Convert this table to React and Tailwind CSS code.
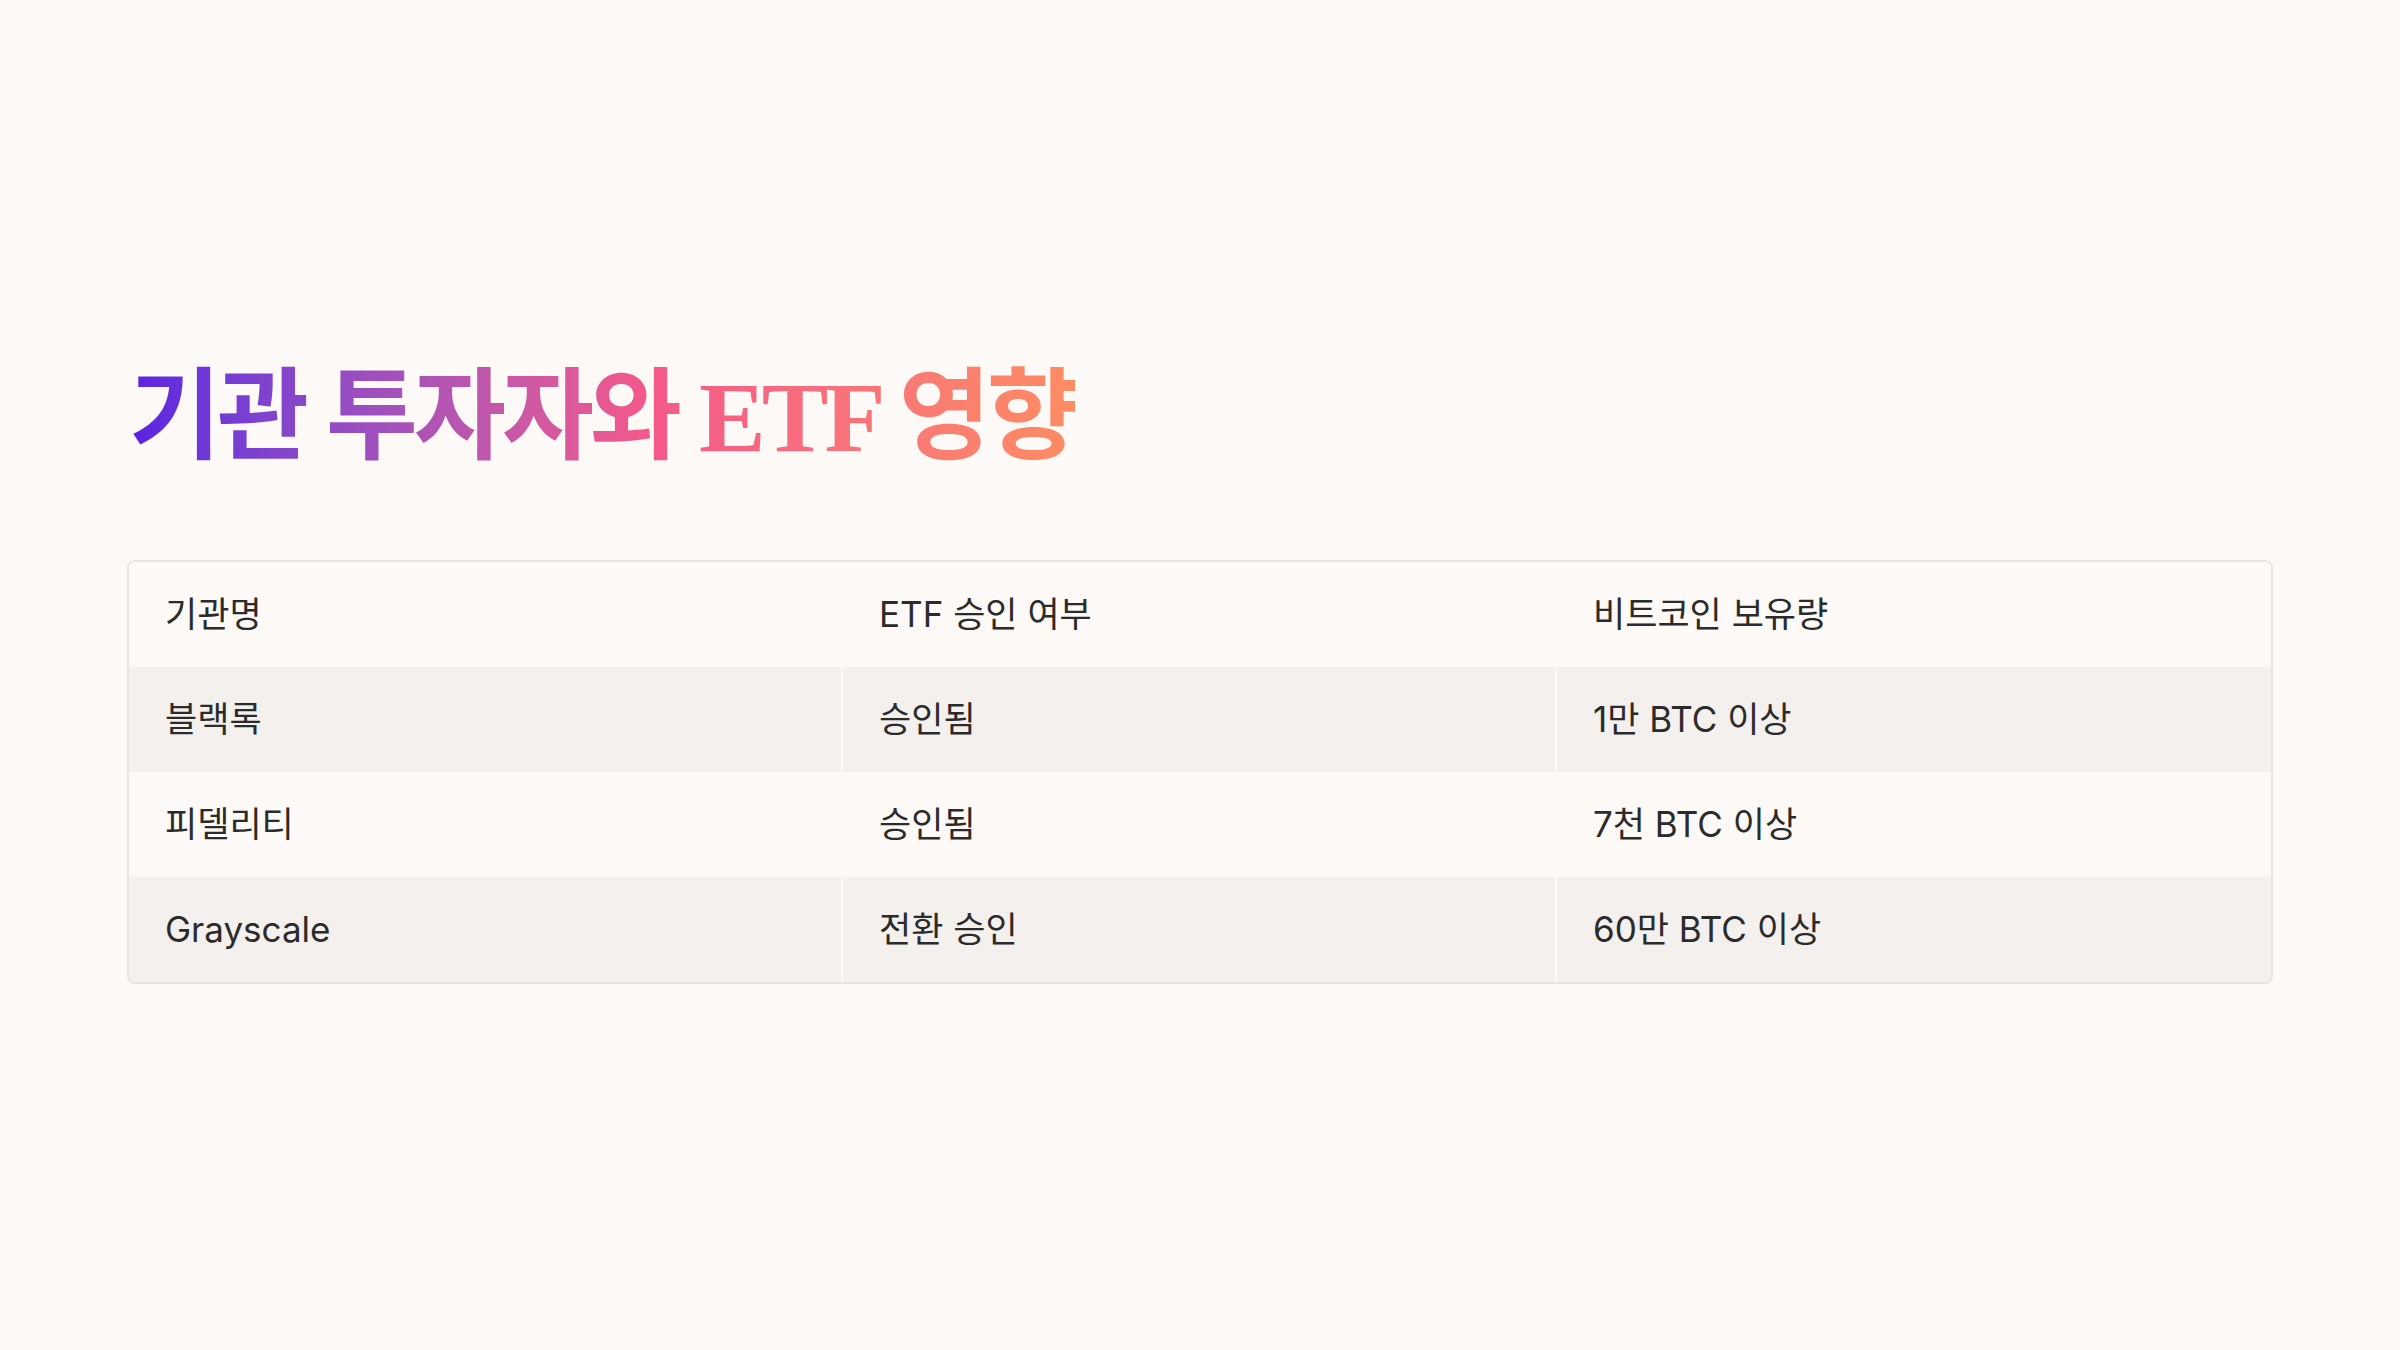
import React from 'react';

const rows = [
  { name: '블랙록', etf: '승인됨', btc: '1만 BTC 이상' },
  { name: '피델리티', etf: '승인됨', btc: '7천 BTC 이상' },
  { name: 'Grayscale', etf: '전환 승인', btc: '60만 BTC 이상' },
];

const Cell = ({ children, last }) => (
  <div
    className={
      'flex items-center h-[105px] pl-[36px] ' +
      (last ? '' : 'border-r-2 border-[#fcf9f6]')
    }
  >
    {children}
  </div>
);

const App = () => {
  return (
    <div
      className="min-h-screen w-full bg-[#fcf9f6] flex flex-col justify-center px-[127px] pb-[8px]"
      style={{ fontFamily: 'Inter, "Noto Sans CJK KR", sans-serif' }}
    >
      {/* Title */}
      <h1
        className="text-[100px] leading-[1.2] font-bold tracking-[-0.04em] bg-gradient-to-r from-[#5a1fe2] via-[#f4588a] via-55% to-[#fd8c62] bg-clip-text text-transparent w-fit pl-[2px]"
        style={{ fontFamily: '"Liberation Serif", "Noto Sans CJK KR", serif' }}
      >
        기관 투자자와 ETF 영향
      </h1>

      {/* Table */}
      <div className="mt-[82px] border-2 border-[#e8e4e0] rounded-lg overflow-hidden text-[35px] text-[#2b2b2b]">
        <div className="grid grid-cols-3 bg-[#fcf9f6]">
          <Cell>기관명</Cell>
          <Cell>ETF 승인 여부</Cell>
          <Cell last>비트코인 보유량</Cell>
        </div>
        {rows.map((row, i) => (
          <div
            key={i}
            className={'grid grid-cols-3 ' + (i % 2 === 0 ? 'bg-[#f3f0ed]' : 'bg-[#fcf9f6]')}
          >
            <Cell>{row.name}</Cell>
            <Cell>{row.etf}</Cell>
            <Cell last>{row.btc}</Cell>
          </div>
        ))}
      </div>
    </div>
  );
};

export default App;
